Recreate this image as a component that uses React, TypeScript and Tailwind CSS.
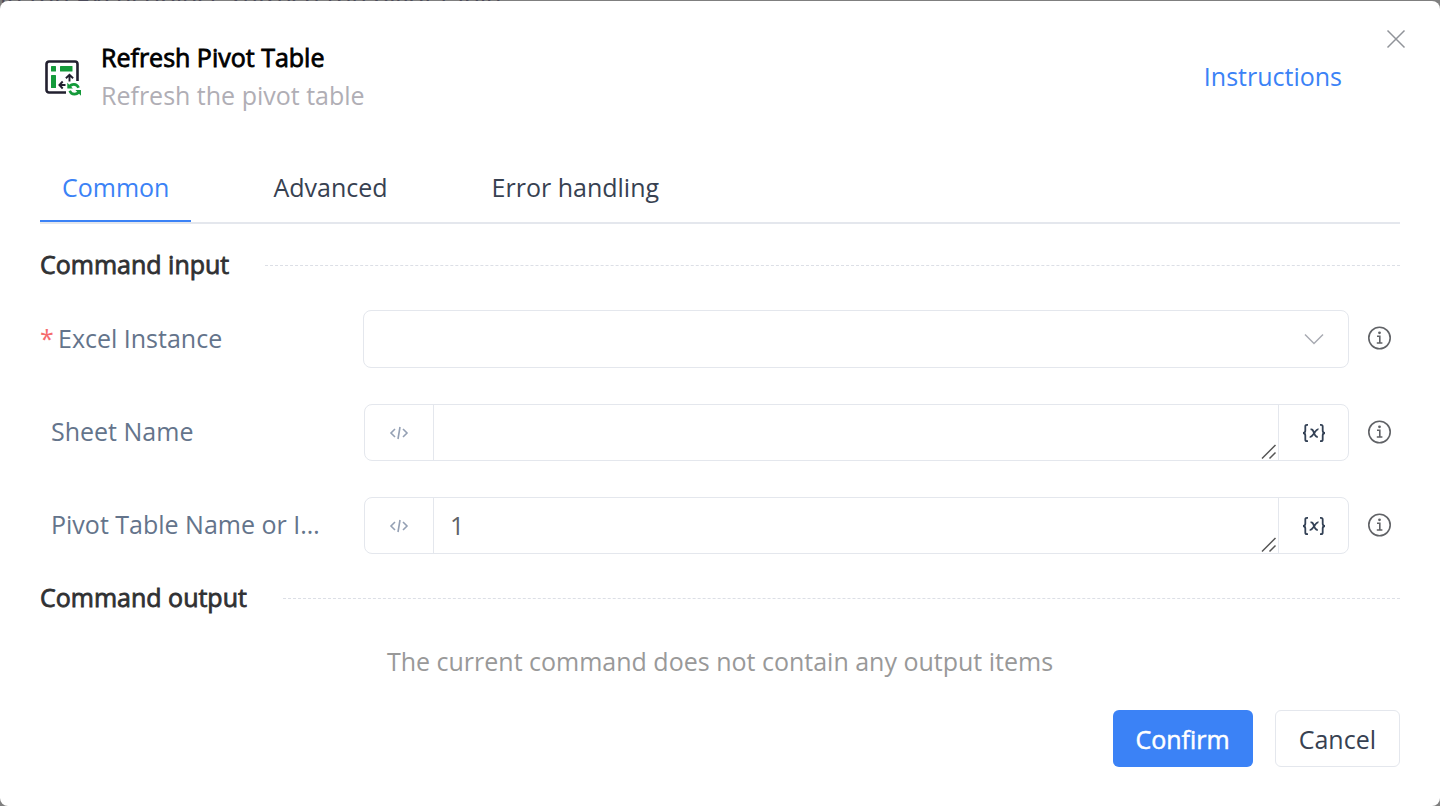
import { useState, type ReactNode } from "react";

function CommandIcon() {
  return (
    <svg className="size-9 shrink-0" viewBox="0 0 36 36" fill="none" aria-hidden="true">
      <path d="M21 32.500H4A2.500 2.500 0 0 1 1.500 30V4A2.500 2.500 0 0 1 4 1.500h26A2.500 2.500 0 0 1 32.500 4v17" stroke="#22202f" strokeWidth="2.600" />
      <rect x="6" y="6" width="5" height="5.500" rx="0.500" fill="#149a3a" />
      <rect x="15" y="6" width="12.500" height="5.500" rx="0.500" fill="#149a3a" />
      <rect x="6" y="15" width="5" height="13" rx="0.500" fill="#149a3a" />
      <path d="M24.500 21.500v-6m-3.600 2.800 3.600-3.400 3.600 3.400M20.500 25h-6m3.200-3.500-3.300 3.500 3.300 3.500" stroke="#22202f" strokeWidth="1.900" />
      <path d="M24.300 27c2-3.500 7.500-3.800 9.300.8M34 31.500c-2 3.500-7.500 3.800-9.300-.8" stroke="#149a3a" strokeWidth="2.600" />
      <path d="M22.300 22.800v5.600h5.600zM36 35.700v-5.600h-5.600z" fill="#149a3a" />
    </svg>
  );
}

function InfoIcon() {
  return (
    <svg className="size-6" viewBox="0 0 24 24" fill="none" stroke="#606266" strokeWidth="1.600" aria-hidden="true">
      <circle cx="11.500" cy="12" r="10.700" />
      <path d="M9 10.300h2.800v6.500M8.800 17h5.600" />
      <circle cx="11.500" cy="6.800" r="1.400" fill="#606266" stroke="none" />
    </svg>
  );
}

function Section({ title }: { title: string }) {
  return (
    <div className="flex h-10 items-center gap-9">
      <h2 className="pb-0.5 text-[#303133] [-webkit-text-stroke:0.8px_#303133]">{title}</h2>
      <div className="flex-1 border-t border-dashed border-[#dcdfe6]" />
    </div>
  );
}

function Row({ id, label, required, children }: { id: string; label: string; required?: boolean; children: ReactNode }) {
  return (
    <div className="flex items-center">
      <label htmlFor={id} className="flex w-[323px] shrink-0 items-center pb-[3px] pr-8 text-[#64748b]">
        {required ? <span className="w-[18px] shrink-0 text-[#f56c6c]">*</span> : <span className="w-[11px] shrink-0" />}
        <span className="truncate">{label}</span>
      </label>
      {children}
      <button type="button" aria-label={`About ${label}`} className="ml-[19px] mr-2 shrink-0 pb-0.5">
        <InfoIcon />
      </button>
    </div>
  );
}

function ExpressionField({ id, value }: { id: string; value: string }) {
  return (
    <div className="ml-px flex h-[57px] min-w-0 flex-1 overflow-hidden rounded-lg border border-[#e4e7ed]">
      <button type="button" aria-label="Code" className="flex w-[69px] shrink-0 items-center justify-center border-r border-[#e4e7ed]">
        <svg className="h-4 w-5" viewBox="0 0 20 16" fill="none" stroke="#94a0b4" strokeWidth="1.600" aria-hidden="true">
          <path d="M6 4 2 8l4 4M14 4l4 4-4 4M11 2 9 14" />
        </svg>
      </button>
      <textarea id={id} defaultValue={value} rows={1} className="min-w-0 flex-1 resize-none overflow-hidden px-4 py-[7px] text-[#606266] outline-none" />
      <svg className="mr-px size-4 shrink-0 self-end" viewBox="0 0 16 16" stroke="#555" strokeWidth="1.500" aria-hidden="true">
        <path d="M1 14.500 14.500 1M8.500 14.500l6-6" />
      </svg>
      <button type="button" aria-label="Insert variable" className="flex w-[70px] shrink-0 items-center justify-center border-l border-[#e4e7ed]">
        <svg className="h-5 w-6" viewBox="0 0 24 20" fill="none" stroke="#334155" strokeWidth="1.800" aria-hidden="true">
          <path d="M6 1.800H5Q3.300 1.800 3.300 3.500v4Q3.300 10 1 10q2.300 0 2.300 2.500v4q0 1.700 1.700 1.700h1M18 1.800h1q1.700 0 1.700 1.700v4Q20.700 10 23 10q-2.300 0-2.300 2.500v4q0 1.700-1.700 1.700h-1" />
          <path d="M8.500 6.500c4-1.500 3 8.500 7.300 7.200M16.500 6.400c-3-1.200-5.500 8.500-8.800 7.300" />
        </svg>
      </button>
    </div>
  );
}

const tabs = ["Common", "Advanced", "Error handling"];

export default function App() {
  const [active, setActive] = useState("Common");
  return (
    <div className="relative flex min-h-screen flex-col overflow-hidden bg-[#7f7f7f] pt-px font-['Open_Sans','Noto_Sans',sans-serif] text-[25px] leading-10">
      <p className="absolute -top-5 left-0 whitespace-nowrap text-[26px] text-[#4b4b5a]">in the Excel object, refresh the pivot table</p>
      <main role="dialog" aria-label="Refresh Pivot Table" className="relative flex-1 rounded-lg bg-white px-10 pb-[38px]">
        <button type="button" aria-label="Close" className="absolute right-[34px] top-7">
          <svg className="size-5" viewBox="0 0 20 20" stroke="#909399" strokeWidth="1.500" aria-hidden="true">
            <path d="m1.500 1.500 17 17m0-17-17 17" />
          </svg>
        </button>
        <header className="flex items-center pt-[37px]">
          <div className="pl-[5px] pt-1"><CommandIcon /></div>
          <div className="ml-5 flex-1 leading-[38px]">
            <h1 className="text-black [-webkit-text-stroke:0.8px_#000]">Refresh Pivot Table</h1>
            <p className="text-[#b0aeb5]">Refresh the pivot table</p>
          </div>
          <a href="#instructions" className="mr-[58px] text-[#3b82f6]">Instructions</a>
        </header>
        <div role="tablist" className="mt-[41px] flex gap-[60px] border-b-2 border-[#e4e7ed]">
          {tabs.map((tab) => (
            <button
              key={tab}
              type="button"
              role="tab"
              aria-selected={active === tab}
              onClick={() => setActive(tab)}
              className={`border-b-2 px-[22px] pb-[13px] pt-3 ${active === tab ? "border-[#3b82f6] text-[#3b82f6]" : "border-transparent text-[#374151]"}`}
            >
              {tab}
            </button>
          ))}
        </div>
        <div className="pt-[21px]">
          <Section title="Command input" />
        </div>
        <div className="flex flex-col gap-9 pb-6 pt-[25px]">
          <Row id="instance" label="Excel Instance" required>
            <div className="relative min-w-0 flex-1">
              <select id="instance" className="block h-[58px] w-full appearance-none rounded-lg border border-[#e4e7ed] bg-white px-4 text-[#606266]">
                <option value=""></option>
              </select>
              <svg className="pointer-events-none absolute right-[25px] top-[19px] size-5" viewBox="0 0 20 20" fill="none" stroke="#a8abb2" strokeWidth="1.500" aria-hidden="true">
                <path d="m1 5.500 9 9 9-9" />
              </svg>
            </div>
          </Row>
          <Row id="sheet" label="Sheet Name">
            <ExpressionField id="sheet" value="" />
          </Row>
          <Row id="pivot" label="Pivot Table Name or Index">
            <ExpressionField id="pivot" value="1" />
          </Row>
        </div>
        <Section title="Command output" />
        <p className="mt-[23px] text-center text-[#999]">The current command does not contain any output items</p>
        <footer className="mt-[29px] flex justify-end gap-[22px]">
          <button type="button" className="h-[57px] rounded-md bg-[#3b82f6] px-[23px] text-white [-webkit-text-stroke:0.5px_#fff]">Confirm</button>
          <button type="button" className="h-[57px] rounded-md border border-[#e4e7ed] px-[23px] text-[#374151]">Cancel</button>
        </footer>
      </main>
    </div>
  );
}
